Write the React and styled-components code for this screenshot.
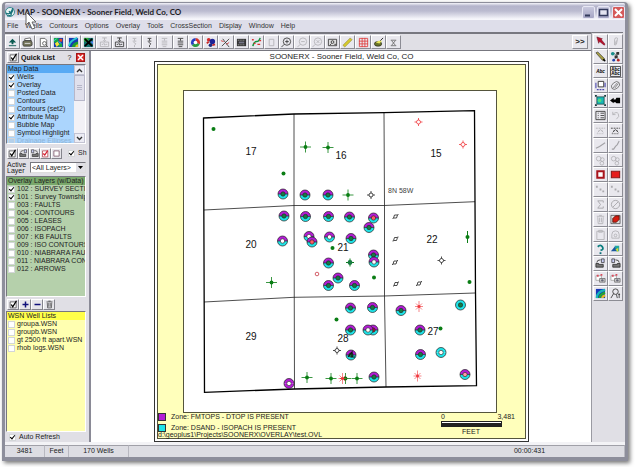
import React, { useState } from 'react';
import styled, { createGlobalStyle } from 'styled-components';

const GlobalStyle = createGlobalStyle`
  * {
    box-sizing: border-box;
  }

  body {
    margin: 0;
    background: #fff;
    font-family: 'Liberation Sans', Arial, sans-serif;
    font-size: 7px;
    line-height: 8px;
    color: #222;
  }

  button, input, select {
    font: inherit;
    color: inherit;
    margin: 0;
    padding: 0;
  }
`;

const Desktop = styled.div`
  display: flex;
  height: 100vh;
  padding: 2px 7px 6px 2px;
`;

const Window = styled.div`
  flex: 1;
  min-width: 0;
  display: flex;
  flex-direction: column;
  background: #e0dfe5;
  border: 1px solid #8d8e9b;
  border-width: 1px 3px 4px 3px;
  border-radius: 4px 4px 0 0;
  box-shadow: 2px 2px 4px rgba(0, 0, 0, 0.55);
`;

const TitleBar = styled.header`
  position: relative;
  display: flex;
  align-items: center;
  gap: 2px;
  height: 17px;
  border-radius: 3px 3px 0 0;
  background: linear-gradient(#f4f4fa 0, #b4b4cb 3px, #bbbbd0 8px, #f6f6fb 16px);

  h1 {
    flex: 1;
    margin: 0;
    font: bold 8px/12px Lato, 'Liberation Sans', sans-serif;
    color: #1c1c24;
  }
`;

const WindowButtons = styled.div`
  display: flex;
  gap: 2px;
  padding-top: 1px;
`;

const WindowButton = styled.button`
  width: 13px;
  height: 13px;
  display: flex;
  border: 1px solid #e8e8f4;
  border-radius: 2px;
  background: ${({ $close }) => ($close ? '#d55a5a' : 'linear-gradient(#c9c9de, #a5a5c4)')};
`;

const MenuBar = styled.nav`
  display: flex;
  gap: 7px;
  height: 12px;
  padding: 2px 2px 0;
  background: #dedeea;

  a {
    color: #333;
    text-decoration: none;
  }
`;

const Columns = styled.div`
  flex: 1;
  min-height: 0;
  display: flex;
`;

const Workspace = styled.div`
  flex: 1;
  min-width: 0;
  display: flex;
  flex-direction: column;
`;

const Toolbar = styled.div`
  display: flex;
  justify-content: space-between;
  height: 19px;
  padding: 1px 3px 1px 0;
  border-top: 2px solid #77777f;
  border-bottom: 1px solid #77777f;
`;

const ToolGroup = styled.div`
  display: flex;
  flex: 0 0 396px;
`;

const ToolButton = styled.button`
  flex: 1;
  min-width: 0;
  display: flex;
  align-items: center;
  justify-content: center;
  background: #e9e8ee;
  border: 1px solid;
  border-color: #fff #8c8c94 #8c8c94 #fff;
  font-weight: bold;

  svg {
    opacity: ${({ $dim }) => ($dim ? 0.3 : 1)};
    flex: none;
  }
`;

const MoreButton = styled(ToolButton)`
  flex: 0 0 16px;
  font-size: 8px;
`;

const Body = styled.div`
  flex: 1;
  min-height: 0;
  display: flex;
`;

const SidePanel = styled.aside`
  flex: 0 0 86px;
  display: flex;
  flex-direction: column;
  padding: 0 3px 0 1px;
  border-right: 2px solid #8a8a96;
  overflow: hidden;
`;

const PanelHeader = styled.div`
  display: flex;
  align-items: center;
  gap: 2px;
  height: 13px;
  padding: 0 1px;

  h2 {
    flex: 1;
    margin: 0;
    font-size: 7px;
    line-height: 10px;
    color: #111;
  }
`;

const SmallButton = styled.button`
  flex: 0 0 ${({ $width }) => $width || 11}px;
  height: 11px;
  display: flex;
  align-items: center;
  justify-content: center;
  border: 1px solid;
  border-color: #fff #85858d #85858d #fff;
  background: #e6e5ea;
  color: #10107a;
`;

const CloseButton = styled.button`
  flex: 0 0 9px;
  height: 9px;
  border: 1px solid #a51616;
  background: #d92a2a;
  display: flex;
`;

const HelpButton = styled.button`
  border: 0;
  background: none;
  flex: 0 0 9px;
  line-height: 9px;
`;

const ListBox = styled.div`
  display: flex;
  flex: ${({ $flex }) => $flex};
  min-height: 0;
  border: 1px solid;
  border-color: #77777f #fff #fff #77777f;
  background: ${({ $color }) => $color};
`;

const ListItems = styled.ul`
  flex: 1;
  min-width: 0;
  margin: 0;
  padding: 0;
  list-style: none;
  overflow: hidden;
`;

const ListHeading = styled.li`
  height: 8px;
  padding-left: 1px;
  white-space: nowrap;
  background: ${({ $color }) => $color};
`;

const ListItem = styled.li`
  height: 8px;

  label {
    display: flex;
    align-items: center;
    gap: 2px;
    padding-left: 1px;
    white-space: nowrap;
    color: ${({ $dim }) => ($dim ? '#8fb4d6' : '#222')};
  }
`;

const CheckBox = styled.input.attrs({ type: 'checkbox' })`
  appearance: none;
  flex: 0 0 7px;
  height: 7px;
  display: flex;
  align-items: center;
  justify-content: center;
  background: ${({ disabled }) => (disabled ? '#b4d0ea' : '#fff')};
  border: 1px solid #d3d6d8;

  &:checked::after {
    content: '';
    width: 2px;
    height: 4px;
    margin-bottom: 1px;
    border: solid #000;
    border-width: 0 1px 1px 0;
    transform: rotate(40deg);
  }
`;

const ScrollBar = styled.div`
  flex: 0 0 11px;
  display: flex;
  flex-direction: column;
  background: #f2f1f6;
`;

const ScrollButton = styled.button`
  flex: 0 0 10px;
  display: flex;
  align-items: center;
  justify-content: center;
  border: 1px solid #c3c3d2;
  background: #ececf4;
`;

const ScrollThumb = styled.div`
  flex: 0 0 26px;
  display: flex;
  align-items: center;
  justify-content: center;
  border: 1px solid #b7b7c9;
  background: #e0e0ec;
`;

const ScrollTrack = styled.div`
  flex: 1;
`;

const PanelTools = styled.div`
  display: flex;
  align-items: center;
  height: ${({ $height }) => $height}px;
  padding-left: 1px;

  label {
    display: flex;
    align-items: center;
    gap: 3px;
    padding-left: 6px;
    white-space: nowrap;
  }
`;

const LayerPicker = styled.div`
  display: flex;
  align-items: center;
  gap: 3px;
  height: 14px;
  padding: 0 0 3px 1px;

  label {
    flex: 0 0 20px;
    line-height: 6px;
  }
`;

const SelectBox = styled.div`
  flex: 1;
  display: flex;
  align-items: center;
  height: 11px;
  background: #fff;
  border: 1px solid;
  border-color: #77777f #ddd #ddd #77777f;

  select {
    appearance: none;
    flex: 1;
    min-width: 0;
    border: 0;
    background: none;
    line-height: 8px;
    padding-left: 1px;
  }

  svg {
    flex: none;
    background: #e0dfe5;
  }
`;

const RefreshLabel = styled.label`
  display: flex;
  align-items: center;
  gap: 3px;
  height: 10px;
  padding-left: 3px;
`;

const Canvas = styled.main`
  flex: 1;
  min-width: 0;
  display: flex;
  flex-direction: column;
  padding: 1px 62px 0 63px;
  background: #fff;

  h2 {
    margin: 0;
    text-align: center;
    font-size: 8px;
    font-weight: normal;
    line-height: 9px;
  }
`;

const Sheet = styled.div`
  flex: 1;
  min-height: 0;
  display: flex;
  border: 1px solid #333;
  padding: 2px;
`;

const SheetInner = styled.div`
  flex: 1;
  min-width: 0;
  display: flex;
  flex-direction: column;
  padding: 25px 0 0;
  border: 1px solid #55553c;
  background: #ffffbb;
`;

const MapFrame = styled.div`
  flex: 1;
  min-height: 0;
  display: flex;
  margin: 0 28px 0 25px;
  border: 1px solid #55553c;
  background: #fff;

  svg {
    width: 100%;
    height: 100%;
  }
`;

const SheetFooter = styled.footer`
  display: flex;
  justify-content: space-between;
  height: 25px;
  padding-right: 10px;
  white-space: nowrap;
`;

const Legend = styled.div`
  display: flex;
  flex-direction: column;
  gap: 3px;

  div {
    display: flex;
    align-items: center;
    gap: 5px;
    height: 8px;
  }

  p {
    margin: -3px 0 0;
    line-height: 6px;
  }
`;

const Swatch = styled.span`
  width: 8px;
  height: 8px;
  border: 1px solid #333;
  background: ${({ $color }) => $color};
`;

const ScaleBar = styled.div`
  width: 74px;
  text-align: center;

  div {
    display: flex;
    justify-content: space-between;
    line-height: 8px;
  }

  hr {
    width: 61px;
    height: 6px;
    margin: 0;
    border: 1px solid #222;
    border-bottom-width: 4px;
    background: #fff;
  }

  p {
    margin: 1px 14px 0 0;
  }
`;

const RightTools = styled.aside`
  flex: 0 0 32px;
  margin-right: 2px;
  border-top: 1px solid #77777f;
  border-left: 1px solid #9a9aa2;
  padding: 1px 0 0 1px;
  background: #e0dfe5;
`;

const RightGrid = styled.div`
  display: grid;
  grid-template-columns: 1fr 1fr;
  grid-auto-rows: 1fr;
  height: 267px;
`;

const StatusBar = styled.footer`
  display: flex;
  height: 15px;
  border-top: 3px solid #f3f3f6;
  background: #dddde3;
  line-height: 10px;
  text-align: center;
`;

const StatusCell = styled.span`
  flex: 0 0 ${({ $width }) => $width}px;
  border-top: 1px solid #a0a0a8;
  border-right: 1px solid #b8b8c0;
`;

const StatusSpacer = styled.span`
  flex: 1;
  border-top: 1px solid #a0a0a8;
`;

const Pointer = styled.svg`
  position: absolute;
  left: 20px;
  top: 8px;
  z-index: 2;
`;

const stroke = { fill: 'none', stroke: '#333', strokeWidth: 0.9 };

const icons = {
  up: <g fill="#0b5a50"><path d="M6 2l4 4H7v2H5V6H2z" /><path d="M2 9h8v1H2z" /></g>,
  print: <g><path d="M3 2l6-1 1 3H3z" fill="#fff" stroke="#333" strokeWidth=".7" /><path d="M1 5l2-1h7l1 2v3l-2 1H2L1 9z" fill="#77775c" stroke="#222" strokeWidth=".7" /><path d="M3 7h6" stroke="#ddd" /></g>,
  preview: <g {...stroke} stroke="#555"><path d="M2.500 1.500h5l2 2v7h-7z" fill="#fff" /><circle cx="7" cy="7" r="2" /><path d="M8.500 8.500l2.500 2.500" /></g>,
  map1: <g><path d="M1 1h10v10H1z" fill="#163bb4" /><path d="M1 1h5v5H1zM6 7h4v4H6z" fill="#18a845" /><path d="M7 2h3v3H7z" fill="#e84b20" /><path d="M2 7l3-2 2 3-3 3z" fill="#f2e53a" /><path d="M1 4l3-2M6 5l3 2" stroke="#35dfdf" /></g>,
  map2: <g><path d="M1 1h10v10H1z" fill="#163bb4" /><path d="M1 10Q2 4 10 1" stroke="#28c7cf" strokeWidth="2" fill="none" /><path d="M4 11q1-5 7-6v6z" fill="#1c9c35" /><path d="M8 11q0-3 3-3v3z" fill="#e3c52b" /></g>,
  map3: <g><path d="M1 1h10v10H1z" fill="#12706e" /><path d="M1 1h5v4H1z" fill="#2ea839" /><path d="M2 2l8 8M10 2l-8 8" stroke="#000" strokeWidth="2" /><path d="M8 5h3v3z" fill="#5a7eff" /></g>,
  post: <g {...stroke}><path d="M3.500 1h5M6 1v3M4.500 3.500L6 5l1.500-1.500M1.500 5.500h9v5h-9zM3 8h1.500l1-1 1 2 1-1H9" /></g>,
  curve: <g {...stroke}><path d="M4 1.500h4M6 2v2M4 4.500h4M5 6q4 1 1 3v2" /></g>,
  lines: <g {...stroke}><path d="M3 1.500h6M6 2v2M3 4.500h6M3 6.500h6M3 8.500h6M4 10.500h4" /></g>,
  pie: <g><path d="M6 6V1a5 5 0 0 1 4.500 7z" fill="#d8342c" /><path d="M6 6l4.500 2A5 5 0 0 1 2 9z" fill="#2a9b42" /><path d="M6 6L2 9A5 5 0 0 1 6 1z" fill="#263cc2" /><circle cx="6" cy="6" r="2" fill="#fff" /></g>,
  balls: <g><circle cx="4" cy="3" r="2" fill="#d62828" /><circle cx="8" cy="5" r="3" fill="#1e2396" /><circle cx="6" cy="9" r="2" fill="#1d2a80" /><path d="M2 7l2-2M8 9l3-1" stroke="#c82a2a" strokeWidth="2" /></g>,
  cross: <g {...stroke}><path d="M2 10L10 2M3 2l3 4 4 5" /><path d="M1 4l3 1M7 8l3-2" stroke="#cf3131" /></g>,
  film: <g><path d="M1 2h10v8H1z" fill="#333" /><path d="M2 3.500h8M2 8.500h8" stroke="#bbb" strokeDasharray="1 1" /><path d="M3 5h6v2H3z" fill="#778" /></g>,
  trend: <g fill="none"><path d="M2 10q1-5 4-5t4-4" stroke="#15943d" strokeWidth="1.600" /><path d="M1 3h2M3 7h2M7 8h3M9 4h2" stroke="#dc3333" strokeWidth="1.500" /></g>,
  page: <path d="M3.500 2.500h5v7h-5z" {...stroke} />,
  zoomIn: <g {...stroke}><circle cx="6.500" cy="5" r="4" /><path d="M4.500 5h4M6.500 3v4M3.500 8l-3 3" /></g>,
  zoomOut: <g {...stroke}><circle cx="6.500" cy="5" r="4" /><path d="M4.500 5h4M3.500 8l-3 3" /></g>,
  zoomOff: <g {...stroke}><circle cx="6.500" cy="5" r="4" /><path d="M5 3.500l3 3M8 3.500l-3 3M3.500 8l-3 3" /></g>,
  extents: <g {...stroke}><path d="M1.500 2.500h9v7h-9z" fill="#ddd" /><circle cx="6" cy="5.500" r="1.500" /><path d="M8 8h2M5 7L3 9" /></g>,
  ruler: <path d="M1 9l8-8 2 2-8 8z" fill="#d6ca2c" stroke="#8a852c" strokeWidth=".6" />,
  grid: <path d="M1.500 1.500h9v9h-9zM4.500 1v10M7.500 1v10M1 4.500h10M1 7.500h10" {...stroke} stroke="#df3b3b" />,
  cube: <g><ellipse cx="5.500" cy="7.500" rx="4" ry="2.500" fill="#6a7428" stroke="#222" strokeWidth=".7" /><path d="M3 6l3-2h4L7 7z" fill="#e6e55b" /><path d="M8 4l3-3" stroke="#222" /></g>,
  xmark: <path d="M3 3.500h6M4 4l4 5M8 4L4 9M3 9.500h6" {...stroke} stroke="#666" />,
  arrow: <path d="M2 1l6 2-1 1 4 5-1 1-5-4-1 2z" fill="#b9102b" stroke="#5b0715" strokeWidth=".5" />,
  clip: <path d="M5 10V4q0-2 2-2t1 2l-1 5q-2 2-1-1l1-3" {...stroke} />,
  pencil: <g><path d="M1 2l2-1 7 7 1 3-3-1z" fill="#a8a043" stroke="#333" strokeWidth=".7" /><path d="M9 9l2 2" stroke="#000" strokeWidth="1.500" /></g>,
  nodes: <g><path d="M4 2l4 4-4 4M7 2l2 8" stroke="#555" strokeWidth=".7" fill="none" /><circle cx="3" cy="3" r="2" fill="#178e8b" /><path d="M7 1h3v3H7zM5 5h3v3H5z" fill="#333" /><circle cx="9" cy="10" r="1.500" fill="#bb2222" /><circle cx="4" cy="10" r="1.500" fill="#2242aa" /></g>,
  abc: <text x="6" y="8" textAnchor="middle" fontSize="5" fontStyle="italic" fontWeight="bold">Abc</text>,
  abc2: <g><path d="M.5.5h11v11H.5z" {...stroke} /><text x="6" y="5" textAnchor="middle" fontSize="5">Abc</text><text x="6" y="10" textAnchor="middle" fontSize="5">Abc</text></g>,
  select: <g><path d="M3.500 1.500h6v6h-6z" fill="#fff" stroke="#333" /><path d="M1 3v6M2 10.500h2M5 10.500h2M8 10.500h2M11 3v5" stroke="#4c49b0" fill="none" strokeWidth="1.200" /></g>,
  pencilRing: <g {...stroke} stroke="#555" strokeWidth=".7"><ellipse cx="6" cy="6" rx="5" ry="3.500" transform="rotate(-40 6 6)" /><path d="M3 9l5-6M5 9l4-5" /></g>,
  image: <g><path d="M2 2h8v8H2z" fill="#19b8b6" stroke="#142a2a" strokeWidth=".7" /><circle cx="5" cy="6" r="2" fill="#54dd7a" /><path d="M0 0h2v2H0zM10 0h2v2h-2zM0 10h2v2H0zM10 10h2v2h-2z" fill="#173e3e" /></g>,
  hand: <path d="M0 6l4-3v2h2l1-2h4v6H7L6 8H4v1z" fill="#000" />,
  table: <g {...stroke}><path d="M1 1.500h10v9H1zM3 3.500h1M6 3.500h4M3 6h1M6 6h4M3 8.500h1M6 8.500h4" /></g>,
  undo: <path d="M3 2v3h3M3 5q4-4 6-1t-2 6" {...stroke} />,
  path: <g {...stroke}><path d="M1 3.500h10" strokeDasharray="2 1" /><path d="M4 6v2M8 6v2M2 9.500h8" strokeDasharray="1 1" /><path d="M3 8l3-3 3 3" /></g>,
  line: <path d="M1 9l4-2 6-4" {...stroke} stroke="#000" strokeWidth="1.200" />,
  polyline: <path d="M2 10h2l2-3 2-2 2-4" {...stroke} stroke="#000" strokeWidth="1.200" />,
  rings: <g {...stroke}><circle cx="4" cy="4" r="2.500" /><circle cx="8" cy="5" r="2" /><circle cx="7.500" cy="9" r="2" /></g>,
  redBox: <path d="M2.500 2.500h7v7h-7z" fill="#fff" stroke="#a8141c" strokeWidth="2.200" />,
  redFill: <path d="M1.500 2.500h9v7h-9z" fill="#e61c1c" stroke="#8b1a1a" strokeWidth="1.200" />,
  dots: <g fill="#222"><path d="M1 2h2v2H1zM5 5h2v2H5zM8 7h2v2H8z" /></g>,
  sigma: <path d="M9 4V2H3l3 4-3 4h6V8" {...stroke} stroke="#000" />,
  none: <g {...stroke} stroke="#000"><circle cx="6" cy="6" r="4.500" /><path d="M3 9l6-6" /></g>,
  trash: <g {...stroke}><path d="M2 2.500h8M4.500 1.500h3M3 3.500l.5 7h5l.5-7M5 4v5M7 4v5" /></g>,
  leaf: <g><path d="M1 1.500h10v9H1z" fill="#ddd" stroke="#333" strokeWidth=".7" /><path d="M3 9V5l3-3h4v4L7 9z" fill="#d51b10" stroke="#431008" strokeWidth=".8" /></g>,
  board: <g {...stroke}><path d="M2 2.500h8v9H2zM4 1.500h4v2H4z" /></g>,
  lock: <g {...stroke}><path d="M2 6a4 4 0 0 1 8 0v4H2z" /><circle cx="6" cy="7" r="1.500" /></g>,
  help: <g><path d="M3 3q3-3 5 0T6 7" fill="none" stroke="#0b7d7e" strokeWidth="2" /><path d="M5 9h2v2H5z" fill="#0b6c77" /></g>,
  shapes: <g><path d="M1 8l5-6 2 6z" fill="#1b579e" /><path d="M5 2h5v6H7z" fill="#20a8a1" /><path d="M6 6l3-2v5z" fill="#dbd82e" /></g>,
  open: <g><path d="M1 10V6h3v1h5v3z" fill="#777" stroke="#222" strokeWidth=".8" /><path d="M2 5q0-3 4-3" {...stroke} /><path d="M7 1h3v4H7z" fill="#c9cdf5" stroke="#333" strokeWidth=".8" /></g>,
  save: <g><path d="M11 10V6H8v1H3v3z" fill="#777" stroke="#222" strokeWidth=".8" /><path d="M10 5q0-3-4-3" {...stroke} /><path d="M2 1h3v4H2z" fill="#c9cdf5" stroke="#333" strokeWidth=".8" /></g>,
  camera: <g><path d="M1 3h6v5H1z" fill="#fff" stroke="#999" strokeWidth=".8" /><path d="M2 2h2v2H2zM6 1h2v2H6z" fill="#d94c5c" /><path d="M5 6h6v4H5z" fill="#ccc" stroke="#666" strokeWidth=".8" /><circle cx="8" cy="8" r="1.300" fill="#667" /></g>,
  rainbow: <g fill="none" strokeWidth="2.500"><path d="M1 1h10v10H1z" fill="#1837b8" /><path d="M2 11q0-7 9-9" stroke="#17b6ba" /><path d="M5 11q0-4 6-6" stroke="#22a831" /><path d="M8 11q0-2 3-3" stroke="#e2bd25" /></g>,
  find: <g {...stroke}><circle cx="6" cy="4" r="3" /><path d="M4 6l-3 5M7 7l1 4M9 7h2M10 6v5" /></g>,
  tick: <g {...stroke}><path d="M1.500 2.500h8v8h-8z" fill="#fff" /><path d="M3 6l2 3 5-8" stroke="#000" strokeWidth="1.800" /></g>,
  redTick: <g {...stroke}><path d="M2 2.500h7v8H2z" fill="#fff" stroke="#b12c3a" /><path d="M3 6l2 2 4-6" stroke="#d51f2f" strokeWidth="1.800" /></g>,
  box: <path d="M2.500 2.500h7v7h-7z" fill="#fff" stroke="#774b60" />,
  plus: <path d="M2 6h8M6 2v8" stroke="#10107a" strokeWidth="2" />,
  minus: <path d="M2 6h8" stroke="#10107a" strokeWidth="2" />,
};

const Icon = ({ name, size = 12 }) => (
  <svg width={size} height={size} viewBox="0 0 12 12" aria-hidden="true">{icons[name]}</svg>
);

// [icon, disabled]
const topTools = [
  ['up'], ['print'], ['preview'], ['map1'], ['map2'], ['map3'], ['post', true], ['post'],
  ['curve', true], ['curve'], ['lines', true], ['lines'], ['pie'], ['balls'], ['cross'],
  ['film'], ['trend'], ['page', true], ['zoomIn'], ['zoomOut', true], ['zoomOff', true],
  ['extents'], ['ruler'], ['grid'], ['cube'], ['xmark'],
];

const sideTools = [
  ['arrow'], ['clip', true], ['pencil'], ['nodes'], ['abc'], ['abc2'], ['select'], ['pencilRing'],
  ['image'], ['hand'], ['table'], ['undo', true], ['path', true], ['path'], ['line', true],
  ['polyline', true], ['rings', true], ['rings', true], ['redBox'], ['redFill'], ['dots', true],
  ['dots', true], ['sigma', true], ['none', true], ['trash', true], ['leaf'], ['board', true],
  ['lock', true], ['help'], ['shapes'], ['open'], ['save'], ['camera'], ['camera'],
  ['rainbow'], ['find'],
];

const menus = ['File', 'Wells', 'Contours', 'Options', 'Overlay', 'Tools', 'CrossSection', 'Display', 'Window', 'Help'];

const mapData = [
  'Wells', 'Overlay', 'Posted Data', 'Contours', 'Contours (set2)', 'Attribute Map',
  'Bubble Map', 'Symbol Highlight', 'Drainage Ellipses',
];

const overlayLayers = [
  '102 : SURVEY SECTIONS', '101 : Survey Townships', '003 : FAULTS', '004 : CONTOURS',
  '005 : LEASES', '006 : ISOPACH', '007 : KB FAULTS', '009 : ISO CONTOURS',
  '010 : NIABRARA FAULTS', '011 : NIABRARA CONTOURS', '012 : ARROWS',
];

const wellLists = ['groupa.WSN', 'groupb.WSN', 'gt 2500 ft apart.WSN', 'rhob logs.WSN'];

const GREEN = '#0a7d14';
const RED = '#f0383c';
const PURPLE = '#b41cd6';
const CYAN = '#1ee4e8';
const CENTER = '#177a42';

const sections = [
  [17, 251, 155], [16, 341, 159], [15, 436, 157],
  [20, 251, 248], [21, 343, 251], [22, 432, 243],
  [29, 251, 340], [28, 343, 342], [27, 433, 335],
];

// [x, y, centre, top, bottom]
const zoneWells = [
  [283, 194], [305, 195], [328, 195], [284, 216], [305.5, 216.5], [328.5, 216.5],
  [349.5, 217], [373.5, 218, '#ff5c64'], [369, 227.5], [282.5, 241, '#fff'], [309, 236.5, '#fff'],
  [312, 242, '#ff5c64'], [329.5, 237, '#fff'], [351, 238.5], [328.5, 263], [373.5, 255],
  [374, 262, '#fff'], [338, 278], [328.5, 285.5], [354.5, 285.5], [350.5, 308], [372.5, 307.5],
  [401, 310.5], [460.5, 305, CENTER, CYAN, CYAN], [350.5, 330], [373, 330, '#b01b32'],
  [368, 330, '#fff'], [420, 330], [351, 355], [420.5, 354.5], [441, 352.5, '#fff', CYAN, CYAN],
  [289, 383.5, '#fff', PURPLE, PURPLE], [374, 377], [465, 374.5, '#ff9aa0'],
];

const dots = [
  [213.5, 129], [283.5, 173.5], [332.5, 248], [374, 277.5], [469.5, 282], [336.5, 319.5], [440.5, 328.5],
];

const gasWells = [
  [305.5, 147], [328, 147.5], [348, 195], [271.5, 282.5], [307, 377.5], [331, 378.5], [345.5, 378.5], [357, 378.5],
];

const dryHoles = [
  [371, 195, '#222'], [441.5, 260.5, '#222'], [337, 350.5, '#222'], [418.5, 122, RED], [463, 144.5, RED],
];

const abandoned = [[419, 306.5], [342.5, 378.5], [417.5, 376]];

const locations = [[395.5, 216.5], [395.5, 239], [395, 262.5], [396, 284], [419, 283.5]];

const ZoneWell = ({ x, y, center = CENTER, top = PURPLE, bottom = CYAN }) => (
  <g transform={`translate(${x} ${y})`}>
    <path d="M-5 0a5 5 0 0 1 10 0z" fill={top} />
    <path d="M-5 0a5 5 0 0 0 10 0z" fill={bottom} />
    <circle r="5" fill="none" stroke="#222" strokeWidth=".7" />
    {top !== bottom && <path d="M-5 0H5" stroke="#222" strokeWidth=".7" />}
    <circle r="2.200" fill={center} stroke="#222" strokeWidth=".6" />
  </g>
);

const FieldMap = () => (
  <svg viewBox="184 91 312 321" role="img" aria-label="Sooner Field sections and wells">
    <g fill="none" stroke="#222" strokeWidth=".8">
      <path d="M294 114V205L294.500 389M384 113L384.500 205V297L386 387" />
      <path d="M204 210L294 205.500H384L475 201.700M204 302L294 297.300L384 296L475 293" />
      <path d="M203.500 118L294 114L384 112.700L474.500 110.700L475 202L475.500 293L476.500 385.700L386 387L294.500 389L204.500 392.300z" stroke="#000" strokeWidth="1.300" />
    </g>
    {gasWells.map(([x, y]) => (
      <g key={`${x}-${y}`} transform={`translate(${x} ${y})`}>
        <path d="M-5.500 0h11M0-5.500v11" stroke={GREEN} strokeWidth=".8" />
        <circle r="1.900" fill={GREEN} />
      </g>
    ))}
    {dots.map(([x, y]) => <circle key={`${x}-${y}`} cx={x} cy={y} r="2" fill={GREEN} />)}
    {zoneWells.map(([x, y, center, top, bottom]) => (
      <ZoneWell key={`${x}-${y}`} x={x} y={y} center={center} top={top} bottom={bottom} />
    ))}
    {dryHoles.map(([x, y, color]) => (
      <g key={`${x}-${y}`} transform={`translate(${x} ${y})`} stroke={color} strokeWidth=".8" fill="#fff">
        <path d="M-4 0h8M0-4v8" />
        <circle r="2" />
      </g>
    ))}
    {abandoned.map(([x, y]) => (
      <g key={`${x}-${y}`} transform={`translate(${x} ${y})`} stroke={RED} strokeWidth=".6" fill={RED}>
        <path d="M-4 0h8M0-5.500v11M-3-3l6 6M3-3l-6 6" />
        <circle r="1.200" />
      </g>
    ))}
    {locations.map(([x, y]) => (
      <path key={`${x}-${y}`} d={`M${x - 2} ${y + 1.5}l1-3h3l-1 3zM${x - 3} ${y + 2}h1M${x + 2} ${y - 2}h1`} fill="none" stroke="#222" strokeWidth=".8" />
    ))}
    <path d="M467.500 231v12" stroke={GREEN} />
    <circle cx="467.500" cy="237" r="2" fill={GREEN} />
    <path d="M346 262.500h8M350 258.500v8" stroke={GREEN} />
    <circle cx="350" cy="262.500" r="2.400" fill={CENTER} />
    <circle cx="317" cy="274" r="1.800" fill="#fff" stroke="#c93945" strokeWidth=".8" />
    <path d="M348 357l4-5v5h3" fill="none" stroke="#111" strokeWidth="1.200" />
    <g fontSize="10" textAnchor="middle" fill="#111">
      {sections.map(([n, x, y]) => <text key={n} x={x} y={y}>{n}</text>)}
    </g>
    <text x="388" y="193" fontSize="7" fill="#444">8N 58W</text>
  </svg>
);

const CheckList = ({ title, items, initial, color, headColor, flex, disabled, children }) => {
  const [checked, setChecked] = useState(initial);

  const toggle = (item) => {
    setChecked((prev) => (prev.includes(item) ? prev.filter((i) => i !== item) : [...prev, item]));
  };

  return (
    <ListBox $color={color} $flex={flex}>
      <ListItems>
        <ListHeading $color={headColor}>{title}</ListHeading>
        {items.map((item) => (
          <ListItem key={item} $dim={item === disabled}>
            <label>
              <CheckBox
                checked={checked.includes(item)}
                disabled={item === disabled}
                onChange={() => toggle(item)}
              />
              {item}
            </label>
          </ListItem>
        ))}
      </ListItems>
      {children}
    </ListBox>
  );
};

const QuickList = () => {
  const [autoRefresh, setAutoRefresh] = useState(true);
  const [showAll, setShowAll] = useState(true);

  return (
    <SidePanel>
      <PanelHeader>
        <SmallButton $width={12} aria-label="Select"><Icon name="tick" size={9} /></SmallButton>
        <h2>Quick List</h2>
        <HelpButton>?</HelpButton>
        <CloseButton aria-label="Close list">
          <svg width="7" height="7" viewBox="0 0 7 7"><path d="M1 1l5 5M6 1L1 6" stroke="#fff" strokeWidth="1.500" /></svg>
        </CloseButton>
      </PanelHeader>

      <CheckList
        title="Map Data"
        items={mapData}
        initial={['Wells', 'Overlay', 'Attribute Map']}
        color="#abd5fd"
        headColor="#58aaf4"
        flex="0 0 80px"
        disabled="Drainage Ellipses"
      >
        <ScrollBar>
          <ScrollButton aria-label="Scroll up">
            <svg width="7" height="5" viewBox="0 0 7 5"><path d="M1 4l2.500-2.500L6 4" fill="none" stroke="#333" strokeWidth="1.400" /></svg>
          </ScrollButton>
          <ScrollThumb>
            <svg width="5" height="6" viewBox="0 0 5 6"><path d="M0 .5h5M0 2.500h5M0 4.500h5" stroke="#b6b6c8" /></svg>
          </ScrollThumb>
          <ScrollTrack />
          <ScrollButton aria-label="Scroll down">
            <svg width="7" height="5" viewBox="0 0 7 5"><path d="M1 1l2.500 2.500L6 1" fill="none" stroke="#333" strokeWidth="1.400" /></svg>
          </ScrollButton>
        </ScrollBar>
      </CheckList>

      <PanelTools $height={18}>
        {['tick', 'open', 'save', 'redTick', 'box'].map((name) => (
          <SmallButton key={name} aria-label={name}><Icon name={name} size={9} /></SmallButton>
        ))}
        <label>
          <CheckBox checked={showAll} onChange={() => setShowAll(!showAll)} />
          Sh
        </label>
      </PanelTools>

      <LayerPicker>
        <label htmlFor="active-layer">Active Layer</label>
        <SelectBox>
          <select id="active-layer">
            <option>&lt;All Layers&gt;</option>
          </select>
          <svg width="9" height="9" viewBox="0 0 9 9"><path d="M2 3h5L4.500 6z" fill="#000" /></svg>
        </SelectBox>
      </LayerPicker>

      <CheckList
        title="Overlay Layers (w/Data)"
        items={overlayLayers}
        initial={['102 : SURVEY SECTIONS', '101 : Survey Townships']}
        color="#b5d0ab"
        headColor="#79a86b"
        flex="0 0 121px"
      />

      <PanelTools $height={14}>
        {['tick', 'plus', 'minus', 'trash'].map((name) => (
          <SmallButton key={name} $width={12} aria-label={name}><Icon name={name} size={9} /></SmallButton>
        ))}
      </PanelTools>

      <CheckList
        title="WSN Well Lists"
        items={wellLists}
        initial={[]}
        color="#ffffb0"
        headColor="#ffff4a"
        flex="1"
      />

      <RefreshLabel>
        <CheckBox checked={autoRefresh} onChange={() => setAutoRefresh(!autoRefresh)} />
        Auto Refresh
      </RefreshLabel>
    </SidePanel>
  );
};

const App = () => (
  <Desktop>
    <GlobalStyle />
    <Window>
      <TitleBar>
        <svg width="10" height="12" viewBox="0 0 10 12" aria-hidden="true">
          <circle cx="5" cy="6" r="4.500" fill="#e9f4f3" stroke="#3c8d92" />
          <path d="M1 7q4 3 7-5M4 5l2 3 2-4M2 10l5-1" fill="none" stroke="#167078" strokeWidth="1.200" />
        </svg>
        <h1>MAP - SOONERX - Sooner Field, Weld Co, CO</h1>
        <WindowButtons>
          <WindowButton aria-label="Minimize">
            <svg width="11" height="11" viewBox="0 0 11 11"><path d="M2 8.500h5" stroke="#333a5c" strokeWidth="2" /></svg>
          </WindowButton>
          <WindowButton aria-label="Maximize">
            <svg width="11" height="11" viewBox="0 0 11 11"><path d="M1.500 2.500h8v6h-8z" fill="#e3e3f0" stroke="#333a5c" strokeWidth="1.500" /></svg>
          </WindowButton>
          <WindowButton aria-label="Close" $close>
            <svg width="11" height="11" viewBox="0 0 11 11"><path d="M2 2l7 7M9 2L2 9" stroke="#fff" strokeWidth="2" /></svg>
          </WindowButton>
        </WindowButtons>
        <Pointer width="12" height="19" viewBox="0 0 12 19" aria-hidden="true">
          <path d="M1 1v13l3-3 3 7 3-1-3-6h4z" fill="#fff" stroke="#666" />
        </Pointer>
      </TitleBar>

      <MenuBar>
        {menus.map((menu) => <a key={menu} href="#menu">{menu}</a>)}
      </MenuBar>

      <Columns>
        <Workspace>
          <Toolbar>
            <ToolGroup>
              {topTools.map(([name, dim], i) => (
                <ToolButton key={i} $dim={dim} aria-label={name}><Icon name={name} size={11} /></ToolButton>
              ))}
            </ToolGroup>
            <MoreButton>&gt;&gt;</MoreButton>
          </Toolbar>
          <Body>
            <QuickList />
            <Canvas>
              <h2>SOONERX - Sooner Field, Weld Co, CO</h2>
              <Sheet>
                <SheetInner>
                  <MapFrame>
                    <FieldMap />
                  </MapFrame>
                  <SheetFooter>
                    <Legend>
                      <div><Swatch $color={PURPLE} />Zone: FMTOPS - DTOP IS PRESENT</div>
                      <div><Swatch $color={CYAN} />Zone: DSAND - ISOPACH IS PRESENT</div>
                      <p>d:\geoplus1\Projects\SOONERX\OVERLAY\test.OVL</p>
                    </Legend>
                    <ScaleBar>
                      <div><span>0</span><span>3,481</span></div>
                      <hr />
                      <p>FEET</p>
                    </ScaleBar>
                  </SheetFooter>
                </SheetInner>
              </Sheet>
            </Canvas>
          </Body>
        </Workspace>
        <RightTools>
          <RightGrid>
            {sideTools.map(([name, dim], i) => (
              <ToolButton key={i} $dim={dim} aria-label={name}><Icon name={name} size={11} /></ToolButton>
            ))}
          </RightGrid>
        </RightTools>
      </Columns>

      <StatusBar>
        <StatusCell $width={40}>3481</StatusCell>
        <StatusCell $width={24}>Feet</StatusCell>
        <StatusCell $width={60}>170 Wells</StatusCell>
        <StatusSpacer />
        <StatusCell $width={190}>00:00:431</StatusCell>
      </StatusBar>
    </Window>
  </Desktop>
);

export default App;
